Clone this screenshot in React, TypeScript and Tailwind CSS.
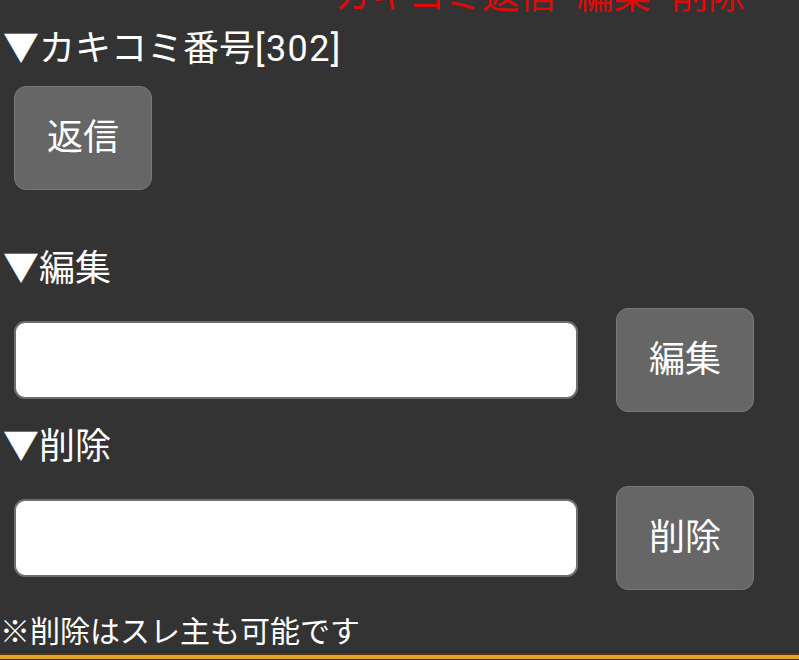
import React from "react";

const font = { fontFamily: 'Roboto, "Noto Sans CJK JP", sans-serif' };

function Btn({ label }: { label: string }) {
  return (
    <button
      type="button"
      className="w-[138px] h-[104px] shrink-0 rounded-[12px] bg-[#666666] border border-[#787878] text-white text-[36px] leading-[40px] flex items-center justify-center"
    >
      {label}
    </button>
  );
}

function Field() {
  return (
    <input
      type="text"
      className="w-[564px] h-[78px] rounded-[11px] bg-white border-2 border-[#6e6e6e] outline-none"
    />
  );
}

export default function App() {
  return (
    <div
      className="w-[799px] h-[660px] overflow-hidden bg-[#333333] flex flex-col relative"
      style={font}
    >
      <p className="mt-[-23px] h-[40px] leading-[40px] text-[37px] text-[#dd0a0a] text-right pr-[54px] whitespace-nowrap">
        カキコミ返信<span className="tracking-[2px]">･</span>編集<span className="tracking-[2px]">･</span>削除
      </p>
      <h2 className="mt-[12px] h-[40px] leading-[40px] text-[36px] text-white pl-[3px] whitespace-nowrap">
        ▼カキコミ番号<span className="tracking-[1.4px]">[302]</span>
      </h2>
      <div className="mt-[17px] pl-[14px]">
        <Btn label="返信" />
      </div>
      <h2 className="mt-[59px] h-[40px] leading-[40px] text-[36px] text-white pl-[3px]">
        ▼編集
      </h2>
      <div className="mt-[19px] pl-[14px] flex items-center gap-[38px]">
        <Field />
        <Btn label="編集" />
      </div>
      <h2 className="mt-[15px] h-[40px] leading-[40px] text-[36px] text-white pl-[3px]">
        ▼削除
      </h2>
      <div className="mt-[19px] pl-[14px] flex items-center gap-[38px]">
        <Field />
        <Btn label="削除" />
      </div>
      <p className="mt-[25px] h-[34px] leading-[34px] text-[30px] text-white whitespace-nowrap">
        ※削除はスレ主も可能です
      </p>
      <div className="absolute left-0 right-0 bottom-0 h-[12px] flex flex-col">
        <div className="h-[3px] bg-[#2f343a]" />
        <div className="h-[2px] bg-[#283220]" />
        <div className="h-[2px] bg-[#5a3412]" />
        <div className="h-[4px] bg-[#e3a22c]" />
        <div className="flex-1 bg-[#4a2208]" />
      </div>
    </div>
  );
}
